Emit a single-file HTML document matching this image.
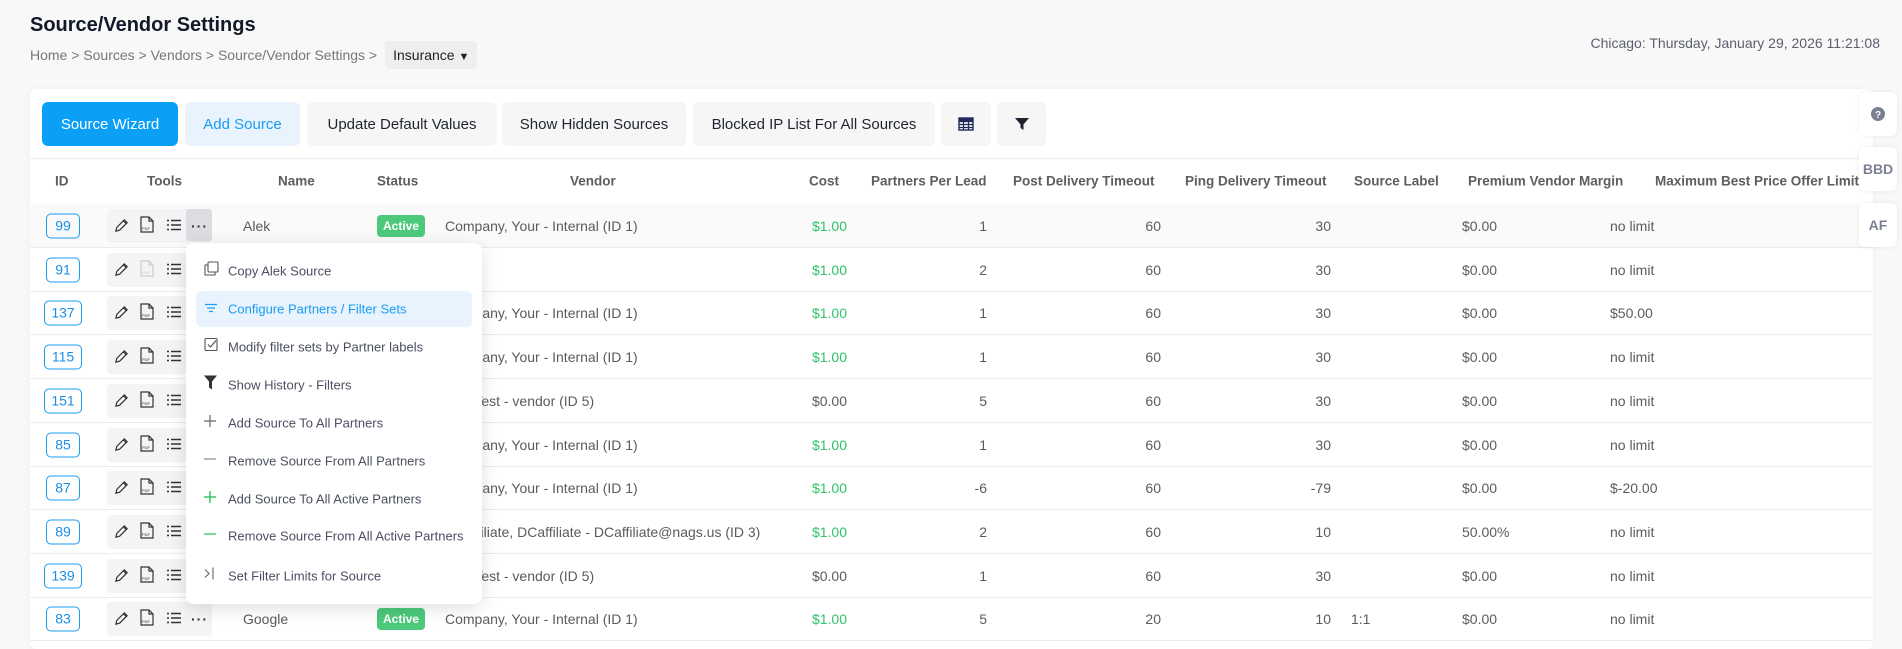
<!DOCTYPE html>
<html><head><meta charset="utf-8">
<style>
*{box-sizing:border-box;margin:0;padding:0}
body{width:1902px;height:642px;overflow:hidden;background:#f8f8f9;font-family:"Liberation Sans",sans-serif;color:#5b5b60;position:relative}
.abs{position:absolute}
h1{position:absolute;left:30px;top:14px;font-size:20px;font-weight:bold;color:#111827}
.bc{position:absolute;left:30px;top:41px;font-size:14px;color:#777;display:flex;align-items:center}
.ins{margin-left:8px;background:#eeeef0;border-radius:4px;padding:6px 8px;color:#222;font-size:14px}
.date{position:absolute;right:22px;top:35px;font-size:14px;color:#5b5f6b}
.card{position:absolute;left:30px;top:89px;width:1843px;height:560px;background:#fff;border-radius:6px;box-shadow:0 0 8px rgba(0,0,0,.04)}
.btn{position:absolute;top:102px;height:44px;border-radius:6px;background:#f6f6f7;color:#1f2430;font-size:15px;display:flex;align-items:center;justify-content:center}
.hdr{position:absolute;top:181px;font-size:13.5px;font-weight:bold;color:#5d5d62;transform:translateY(-50%);white-space:nowrap}
.line{position:absolute;left:30px;width:1843px;height:1px;background:#ececee}
.row{position:absolute;left:30px;width:1843px;height:44px;border-bottom:1px solid #ececee}
.c{position:absolute;top:50%;transform:translateY(-50%);font-size:14px;white-space:nowrap;color:#5b5b60}
.r{text-align:right}
.id{border:1.5px solid #1a9cf0;border-radius:5px;color:#1a8ee8;height:25px;width:35px;display:flex;align-items:center;justify-content:center;font-size:14px}
.tools{position:absolute;left:77px;top:5px;width:105px;height:34px;background:#f4f4f6;border-radius:4px}
.act{background:#4cc97a;color:#fff;font-weight:bold;font-size:12px;border-radius:4px;padding:4px 6px}
.g{color:#2fc36a}
.menu{position:absolute;left:186px;top:243px;width:296px;height:361px;background:#fff;border-radius:8px;box-shadow:0 4px 18px rgba(0,0,0,.13);z-index:5}
.mi{position:absolute;left:42px;font-size:13px;color:#4b5060;transform:translateY(-50%);white-space:nowrap}
.mic{position:absolute;left:18px;transform:translateY(-50%)}
.side{position:absolute;left:1859px;width:38px;height:44px;background:#fff;border-radius:6px;box-shadow:0 0 5px rgba(0,0,0,.08);display:flex;align-items:center;justify-content:center;font-weight:bold;color:#7c8095;font-size:14px}
</style></head><body>
<h1>Source/Vendor Settings</h1>
<div class="bc">Home &gt; Sources &gt; Vendors &gt; Source/Vendor Settings &gt; <span class="ins">Insurance <span style="font-size:11px">&#9660;</span></span></div>
<div class="date">Chicago: Thursday, January 29, 2026 11:21:08</div>
<div class="card"></div>
<div class="btn" style="left:42px;width:136px;background:#0ba0f5;color:#fff">Source Wizard</div>
<div class="btn" style="left:185px;width:115px;background:#e8f3fe;color:#1a9cf0">Add Source</div>
<div class="btn" style="left:307px;width:190px">Update Default Values</div>
<div class="btn" style="left:502px;width:184px">Show Hidden Sources</div>
<div class="btn" style="left:693px;width:242px">Blocked IP List For All Sources</div>
<div class="btn" style="left:941px;width:50px"><svg width="16" height="14" viewBox="0 0 16 14"><rect x="1" y="1" width="14" height="12" fill="none" stroke="#1f2a5a" stroke-width="1.4"/><path d="M1 4.5h14M1 7.5h14M1 10.5h14M5.5 1v12M10.5 1v12" stroke="#1f2a5a" stroke-width="1.2"/><rect x="1" y="1" width="14" height="3" fill="#1f2a5a"/></svg></div>
<div class="btn" style="left:997px;width:49px"><svg width="14" height="14" viewBox="0 0 14 14"><path d="M0 1h14L8.5 7.5V13l-3-2V7.5z" fill="#1f2430"/></svg></div>
<div class="line" style="top:158px"></div>
<div class="hdr" style="left:55px">ID</div>
<div class="hdr" style="left:147px">Tools</div>
<div class="hdr" style="left:278px">Name</div>
<div class="hdr" style="left:377px">Status</div>
<div class="hdr" style="left:570px">Vendor</div>
<div class="hdr" style="left:809px">Cost</div>
<div class="hdr" style="left:871px">Partners Per Lead</div>
<div class="hdr" style="left:1013px">Post Delivery Timeout</div>
<div class="hdr" style="left:1185px">Ping Delivery Timeout</div>
<div class="hdr" style="left:1354px">Source Label</div>
<div class="hdr" style="left:1468px">Premium Vendor Margin</div>
<div class="hdr" style="left:1655px">Maximum Best Price Offer Limit</div>
<div class="line" style="top:204px"></div>

<div id="rows"></div>
<script>
var data=[
["99","Alek",1,"Company, Your - Internal (ID 1)","$1.00","1","60","30","","$0.00","no limit"],
["91","",0,"","$1.00","2","60","30","","$0.00","no limit"],
["137","",0,"Company, Your - Internal (ID 1)","$1.00","1","60","30","","$0.00","$50.00"],
["115","",0,"Company, Your - Internal (ID 1)","$1.00","1","60","30","","$0.00","no limit"],
["151","",0,"Test Test - vendor (ID 5)","$0.00","5","60","30","","$0.00","no limit"],
["85","",0,"Company, Your - Internal (ID 1)","$1.00","1","60","30","","$0.00","no limit"],
["87","",0,"Company, Your - Internal (ID 1)","$1.00","-6","60","-79","","$0.00","$-20.00"],
["89","",0,"DCaffiliate, DCaffiliate - DCaffiliate@nags.us (ID 3)","$1.00","2","60","10","","50.00%","no limit"],
["139","",0,"Test Test - vendor (ID 5)","$0.00","1","60","30","","$0.00","no limit"],
["83","Google",1,"Company, Your - Internal (ID 1)","$1.00","5","20","10","1:1","$0.00","no limit"]];
var pencil='<svg width="15" height="15" viewBox="0 0 16 16"><path d="M2 14l1-4 8-8 3 3-8 8z M10 3l3 3" fill="none" stroke="#333" stroke-width="1.3"/></svg>';
var pdf=function(c){return '<svg width="14" height="17" viewBox="0 0 14 17"><path d="M1 1h8l4 4v11H1z M9 1v4h4" fill="none" stroke="'+c+'" stroke-width="1.2"/><text x="2" y="14" font-size="4" fill="'+c+'" font-family="Liberation Sans">PDF</text></svg>';};
var list='<svg width="14" height="12" viewBox="0 0 14 12"><path d="M0 1.5h2M0 6h2M0 10.5h2M4 1.5h10M4 6h10M4 10.5h10" stroke="#333" stroke-width="1.4"/></svg>';
var h='';
for(var i=0;i<data.length;i++){var d=data[i];var t=Math.round(204+i*43.7);
h+='<div class="row" style="top:'+t+'px;'+(i==0?'background:#fafafb':'')+'">';
var w=d[0].length==3?38:34;
h+='<div class="c id" style="left:'+(33-w/2)+'px;width:'+w+'px">'+d[0]+'</div>';
h+='<div class="tools"></div>';
h+='<div class="c" style="left:84px;margin-top:1px">'+pencil+'</div>';
h+='<div class="c" style="left:110px">'+pdf(i==1?'#ccc':'#333')+'</div>';
h+='<div class="c" style="left:137px">'+list+'</div>';
if(i==0)h+='<div class="abs" style="left:156px;top:5px;width:26px;height:32px;background:#dcdde3;border-radius:3px"></div>';
h+='<div class="c" style="left:161px;font-weight:bold;color:#333;letter-spacing:1px">&middot;&middot;&middot;</div>';
if(d[1])h+='<div class="c" style="left:213px">'+d[1]+'</div>';
if(d[2])h+='<div class="c act" style="left:347px">Active</div>';
h+='<div class="c" style="left:415px">'+d[3]+'</div>';
h+='<div class="c r '+(d[4]=="$1.00"?'g':'')+'" style="right:'+(1873-847)+'px">'+d[4]+'</div>';
h+='<div class="c r" style="right:'+(1873-987)+'px">'+d[5]+'</div>';
h+='<div class="c r" style="right:'+(1873-1161)+'px">'+d[6]+'</div>';
h+='<div class="c r" style="right:'+(1873-1331)+'px">'+d[7]+'</div>';
h+='<div class="c" style="left:1321px">'+d[8]+'</div>';
h+='<div class="c" style="left:1432px">'+d[9]+'</div>';
h+='<div class="c" style="left:1580px">'+d[10]+'</div>';
h+='</div>';}
document.getElementById('rows').innerHTML=h;
</script>

<div class="menu">
<div class="abs" style="left:10px;top:48px;width:276px;height:36px;background:#e8f3fe;border-radius:6px"></div>
<div class="mic" style="top:28px"><svg width="15" height="15" viewBox="0 0 15 15"><rect x="4" y="1" width="10" height="10" rx="1" fill="none" stroke="#555" stroke-width="1.1"/><path d="M4 4H1v10h10v-3" fill="none" stroke="#555" stroke-width="1.1"/></svg></div>
<div class="mi" style="top:28px">Copy Alek Source</div>
<div class="mic" style="top:66px"><svg width="14" height="10" viewBox="0 0 14 10"><path d="M1 1.5h12M3 5h8M5 8.5h4" stroke="#1a9cf0" stroke-width="1.3"/></svg></div>
<div class="mi" style="top:66px;color:#1a9cf0">Configure Partners / Filter Sets</div>
<div class="mic" style="top:104px"><svg width="14" height="14" viewBox="0 0 14 14"><rect x="1" y="1" width="12" height="12" rx="1" fill="none" stroke="#555" stroke-width="1.1"/><path d="M4 7l2.5 2.5L12 3" fill="none" stroke="#555" stroke-width="1.2"/></svg></div>
<div class="mi" style="top:104px">Modify filter sets by Partner labels</div>
<div class="mic" style="top:142px"><svg width="13" height="14" viewBox="0 0 13 14"><path d="M0 0h13L8 6v8l-3-2V6z" fill="#333"/></svg></div>
<div class="mi" style="top:142px">Show History - Filters</div>
<div class="mic" style="top:180px"><svg width="12" height="12" viewBox="0 0 12 12"><path d="M6 0v12M0 6h12" stroke="#666" stroke-width="1.2"/></svg></div>
<div class="mi" style="top:180px">Add Source To All Partners</div>
<div class="mic" style="top:218px"><svg width="12" height="12" viewBox="0 0 12 12"><path d="M0 6h12" stroke="#999" stroke-width="1.4"/></svg></div>
<div class="mi" style="top:218px">Remove Source From All Partners</div>
<div class="mic" style="top:256px"><svg width="12" height="12" viewBox="0 0 12 12"><path d="M6 0v12M0 6h12" stroke="#3cc56b" stroke-width="1.5"/></svg></div>
<div class="mi" style="top:256px">Add Source To All Active Partners</div>
<div class="mic" style="top:293px"><svg width="12" height="12" viewBox="0 0 12 12"><path d="M0 6h12" stroke="#56cf84" stroke-width="1.6"/></svg></div>
<div class="mi" style="top:293px">Remove Source From All Active Partners</div>
<div class="mic" style="top:333px"><svg width="12" height="14" viewBox="0 0 12 14"><path d="M1 3l4 4-4 4M9 1v12" fill="none" stroke="#666" stroke-width="1.1"/></svg></div>
<div class="mi" style="top:333px">Set Filter Limits for Source</div>
</div>

<div class="side" style="top:92px"><svg width="14" height="14" viewBox="0 0 14 14"><circle cx="7" cy="7" r="7" fill="#7c8095"/><text x="7" y="11" font-size="10" font-weight="bold" text-anchor="middle" fill="#fff" font-family="Liberation Sans">?</text></svg></div>
<div class="side" style="top:147px">BBD</div>
<div class="side" style="top:203px">AF</div>
</body></html>
